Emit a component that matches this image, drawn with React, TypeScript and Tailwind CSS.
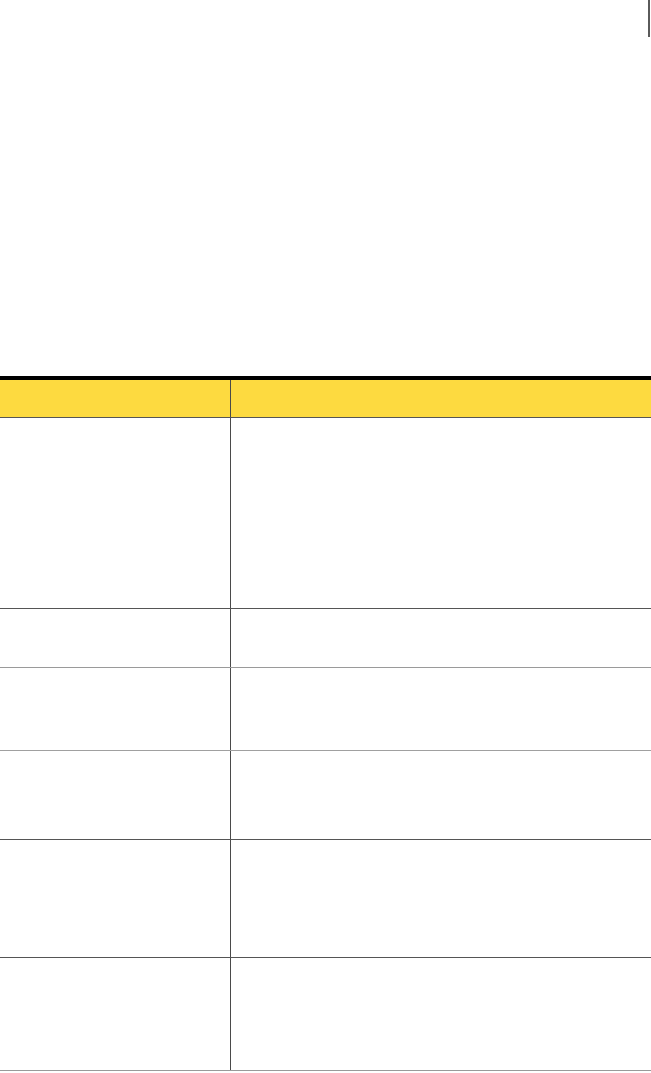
const rows = [
  { h: "h-[191px]", line: "border-[#555555]" },
  { h: "h-[59px]", line: "border-[#9a9a9a]" },
  { h: "h-[83px]", line: "border-[#a0a0a0]" },
  { h: "h-[89px]", line: "border-[#555555]" },
  { h: "h-[118px]", line: "border-[#555555]" },
  { h: "h-[113px]", line: "border-[#9a9a9a]" },
];

export default function App() {
  return (
    <div className="flex min-h-[1073px] w-[651px] flex-col bg-white font-['Liberation_Sans',sans-serif]">
      <div className="flex h-[376px] justify-end pr-[1px]">
        <div className="h-[37px] w-[2px] bg-[#5a5a5a]" />
      </div>

      <div className="flex h-[42px] border-t-4 border-b border-t-black border-b-[#555555] bg-[#fdda40]">
        <div className="w-[230px]" />
        <div className="flex-1 border-l border-[#4a4a4a]" />
      </div>

      {rows.map((r, i) => (
        <div key={i} className={`flex ${r.h} border-b ${r.line}`}>
          <div className="w-[230px]" />
          <div className="flex-1 border-l border-[#4a4a4a]" />
        </div>
      ))}
    </div>
  );
}
